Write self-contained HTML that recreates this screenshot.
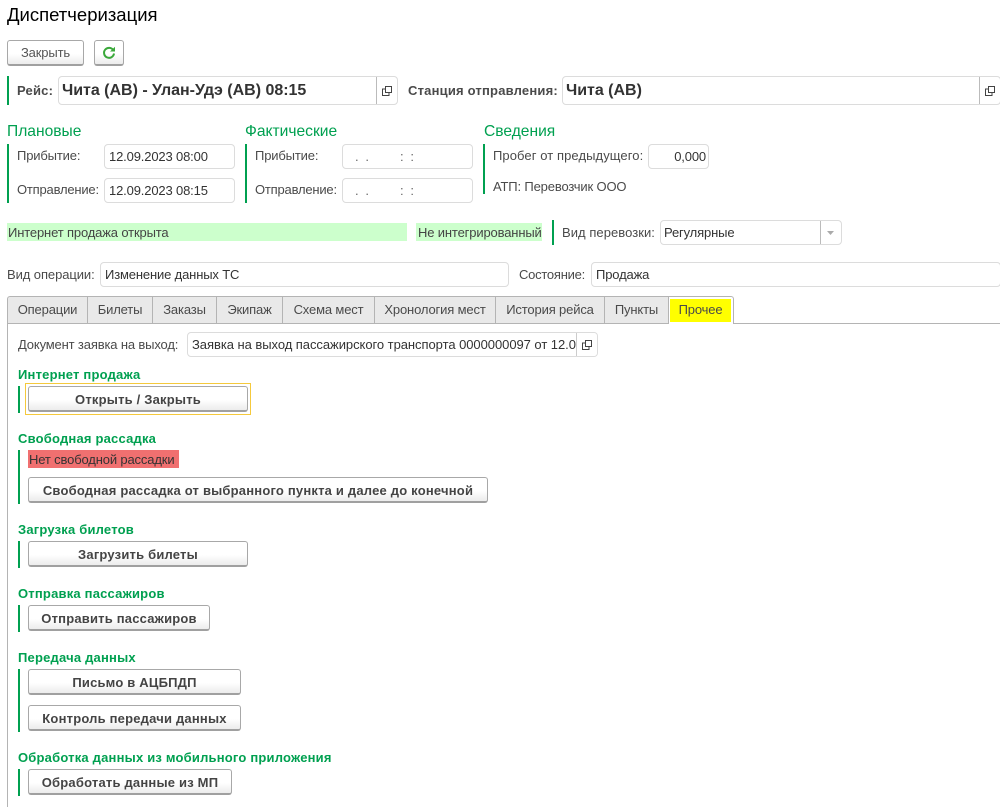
<!DOCTYPE html>
<html lang="ru"><head><meta charset="utf-8"><title>Диспетчеризация</title>
<style>
html,body{margin:0;padding:0;background:#fff}
body{width:1000px;height:807px;overflow:hidden;position:relative;font-family:"Liberation Sans",Arial,sans-serif;font-size:13px;color:#4a4a4a}
.a{position:absolute;white-space:nowrap}
.t{position:absolute;white-space:nowrap;line-height:16px;letter-spacing:-.15px;padding-top:1px}
.tb{font-weight:bold;letter-spacing:.2px}
.bar{position:absolute;width:2px;background:#00a050}
.f{position:absolute;box-sizing:border-box;border:1px solid #dcdcdc;border-radius:4px;background:#fff;line-height:23px;padding-left:4px;color:#333;white-space:nowrap;overflow:hidden;letter-spacing:-.15px}
.f i{position:absolute;top:0;bottom:0;right:20px;width:1px;background:#bbb}
.f svg{position:absolute;right:5px;top:50%;margin-top:-5px}
.big{line-height:28px;font-size:16px;font-weight:bold;color:#333;padding-left:3px;letter-spacing:-.015px}
.b{position:absolute;box-sizing:border-box;border:1px solid #a8a8a8;border-bottom:2px solid #a0a0a0;border-radius:3px;background:linear-gradient(#fff 0,#fff 55%,#ececec 100%);text-align:center;font-weight:bold;font-size:13px;line-height:26px;color:#444;white-space:nowrap;letter-spacing:.2px}
.h{position:absolute;font-size:15.6px;color:#00a050;line-height:18px;white-space:nowrap}
.g{position:absolute;font-weight:bold;color:#00a050;line-height:16px;font-size:13px;white-space:nowrap;letter-spacing:.2px}
.tab{position:absolute;top:296px;height:27px;box-sizing:border-box;background:#e9e9e9;border:1px solid #b4b4b4;border-bottom:0;border-left:0;text-align:center;line-height:26px;letter-spacing:-.15px;white-space:nowrap}
</style></head><body>
<div class="a" style="left:7px;top:5px;font-size:18.5px;line-height:20px;color:#000">Диспетчеризация</div>

<div class="b" style="left:7px;top:40px;width:77px;height:26px;font-weight:normal;color:#555;letter-spacing:-.15px;line-height:24px">Закрыть</div>
<div class="b" style="left:94px;top:40px;width:30px;height:26px"><svg width="14" height="14" viewBox="0 0 14 14" style="position:absolute;left:7px;top:5px"><path d="M11.300 4.200A5 5 0 1 0 12 7.500" fill="none" stroke="#3aa83a" stroke-width="2"/><path d="M8 5.500H13V.8z" fill="#3aa83a"/></svg></div>

<div class="bar" style="left:7px;top:76px;height:29px"></div>
<div class="t tb" style="left:17px;top:82px">Рейс:</div>
<div class="f big" style="left:58px;top:76px;width:340px;height:29px">Чита (АВ) - Улан-Удэ (АВ) 08:15<i></i><svg width="10" height="10" viewBox="0 0 10 10"><path d="M3.500 .5h6v6h-6zM3 3H.5v6.500H7V7" fill="none" stroke="#444"/></svg></div>
<div class="t tb" style="left:408px;top:82px">Станция отправления:</div>
<div class="f big" style="left:562px;top:76px;width:439px;height:29px">Чита (АВ)<i></i><svg width="10" height="10" viewBox="0 0 10 10"><path d="M3.500 .5h6v6h-6zM3 3H.5v6.500H7V7" fill="none" stroke="#444"/></svg></div>

<div class="h" style="left:7px;top:123px">Плановые</div>
<div class="bar" style="left:7px;top:144px;height:59px"></div>
<div class="t" style="left:17px;top:147px">Прибытие:</div>
<div class="f" style="left:104px;top:144px;width:131px;height:25px">12.09.2023 08:00</div>
<div class="t" style="left:17px;top:181px;letter-spacing:-.2px">Отправление:</div>
<div class="f" style="left:104px;top:178px;width:131px;height:25px">12.09.2023 08:15</div>

<div class="h" style="left:245px;top:123px">Фактические</div>
<div class="bar" style="left:245px;top:144px;height:59px"></div>
<div class="t" style="left:255px;top:147px">Прибытие:</div>
<div class="f" style="left:342px;top:144px;width:131px;height:25px;white-space:pre;color:#666;padding-left:12px">.  .         :  :</div>
<div class="t" style="left:255px;top:181px;letter-spacing:-.2px">Отправление:</div>
<div class="f" style="left:342px;top:178px;width:131px;height:25px;white-space:pre;color:#666;padding-left:12px">.  .         :  :</div>

<div class="h" style="left:484px;top:123px">Сведения</div>
<div class="bar" style="left:483px;top:144px;height:50px"></div>
<div class="t" style="left:493px;top:147px;letter-spacing:.08px">Пробег от предыдущего:</div>
<div class="f" style="left:648px;top:144px;width:61px;height:25px;text-align:right;padding:0 2px 0 0">0,000</div>
<div class="t" style="left:493px;top:178px">АТП: Перевозчик ООО</div>

<div class="t" style="left:7px;top:223px;width:400px;height:18px;line-height:18px;background:#ccffcc;color:#444;padding-left:1px;box-sizing:border-box">Интернет продажа открыта</div>
<div class="t" style="left:416px;top:223px;width:126px;height:18px;line-height:18px;background:#ccffcc;color:#444;padding-left:2px;box-sizing:border-box">Не интегрированный</div>
<div class="bar" style="left:552px;top:220px;height:25px"></div>
<div class="t" style="left:562px;top:224px;letter-spacing:.05px">Вид перевозки:</div>
<div class="f" style="left:660px;top:220px;width:182px;height:25px;padding-left:3px">Регулярные<i></i><svg width="8" height="4" viewBox="0 0 8 4" style="right:6px;margin-top:-2px"><path d="M0 0h7L3.500 4z" fill="#aaa"/></svg></div>

<div class="t" style="left:7px;top:266px;letter-spacing:-.08px">Вид операции:</div>
<div class="f" style="left:100px;top:262px;width:409px;height:25px">Изменение данных ТС</div>
<div class="t" style="left:519px;top:266px;letter-spacing:-.25px">Состояние:</div>
<div class="f" style="left:591px;top:262px;width:410px;height:25px">Продажа</div>

<div class="a" style="left:7px;top:323px;width:993px;height:1px;background:#b4b4b4"></div>
<div class="a" style="left:7px;top:323px;width:1px;height:484px;background:#b4b4b4"></div>
<div class="tab" style="left:7px;width:81px;border-left:1px solid #b4b4b4;border-radius:3px 0 0 0">Операции</div>
<div class="tab" style="left:88px;width:65px">Билеты</div>
<div class="tab" style="left:153px;width:64px">Заказы</div>
<div class="tab" style="left:217px;width:66px">Экипаж</div>
<div class="tab" style="left:283px;width:92px">Схема мест</div>
<div class="tab" style="left:375px;width:121px">Хронология мест</div>
<div class="tab" style="left:496px;width:109px">История рейса</div>
<div class="tab" style="left:605px;width:64px">Пункты</div>
<div class="tab" style="left:669px;width:65px;height:28px;background:#fff;border-radius:0 3px 0 0;padding:2px 2px 3px 1px;line-height:21px"><span style="display:block;background:#ff0;height:23px;line-height:22px">Прочее</span></div>

<div class="t" style="left:18px;top:336px">Документ заявка на выход:</div>
<div class="f" style="left:187px;top:332px;width:411px;height:25px;letter-spacing:-.05px">Заявка на выход пассажирского транспорта 0000000097 от 12.0<span style="position:absolute;right:0;top:0;bottom:0;width:21px;background:#fff"></span><i style="background:#ccc"></i><svg width="10" height="10" viewBox="0 0 10 10"><path d="M3.500 .5h6v6h-6zM3 3H.5v6.500H7V7" fill="none" stroke="#444"/></svg></div>

<div class="g" style="left:18px;top:367px">Интернет продажа</div>
<div class="bar" style="left:18px;top:386px;height:27px"></div>
<div class="a" style="left:25px;top:383px;width:226px;height:32px;box-sizing:border-box;border:1px solid #f5c93c"></div>
<div class="b" style="left:28px;top:386px;width:220px;height:26px">Открыть / Закрыть</div>

<div class="g" style="left:18px;top:431px">Свободная рассадка</div>
<div class="bar" style="left:18px;top:450px;height:54px"></div>
<div class="t" style="left:28px;top:450px;width:151px;height:18px;line-height:18px;background:#f07070;color:#333;padding-left:1px;box-sizing:border-box">Нет свободной рассадки</div>
<div class="b" style="left:28px;top:477px;width:460px;height:26px">Свободная рассадка от выбранного пункта и далее до конечной</div>

<div class="g" style="left:18px;top:522px">Загрузка билетов</div>
<div class="bar" style="left:18px;top:541px;height:27px"></div>
<div class="b" style="left:28px;top:541px;width:220px;height:26px">Загрузить билеты</div>

<div class="g" style="left:18px;top:586px">Отправка пассажиров</div>
<div class="bar" style="left:18px;top:605px;height:27px"></div>
<div class="b" style="left:28px;top:605px;width:182px;height:26px">Отправить пассажиров</div>

<div class="g" style="left:18px;top:650px">Передача данных</div>
<div class="bar" style="left:18px;top:669px;height:63px"></div>
<div class="b" style="left:28px;top:669px;width:213px;height:26px">Письмо в АЦБПДП</div>
<div class="b" style="left:28px;top:705px;width:213px;height:26px">Контроль передачи данных</div>

<div class="g" style="left:18px;top:750px">Обработка данных из мобильного приложения</div>
<div class="bar" style="left:18px;top:769px;height:27px"></div>
<div class="b" style="left:28px;top:769px;width:204px;height:26px">Обработать данные из МП</div>
</body></html>
